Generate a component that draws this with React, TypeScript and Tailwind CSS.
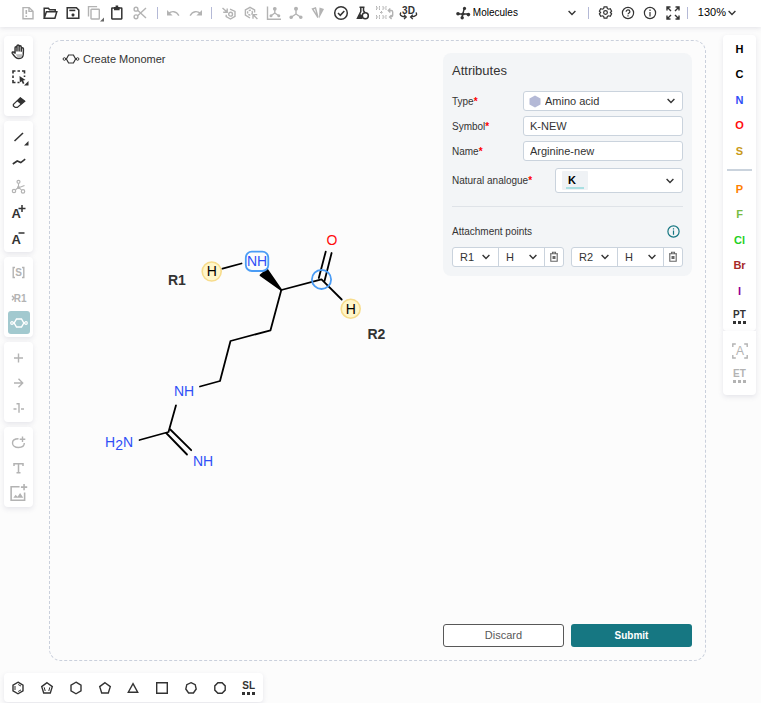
import React from "react";

type IconProps = { children: React.ReactNode; size?: number };

function Icon({ children, size = 16 }: IconProps) {
  return (
    <svg
      width={size}
      height={size}
      viewBox="0 0 16 16"
      fill="none"
      stroke="currentColor"
      strokeWidth="1.4"
      className="shrink-0 overflow-visible"
      aria-hidden="true"
    >
      {children}
    </svg>
  );
}

function Tool({
  label,
  children,
  muted = false,
  active = false,
}: {
  label: string;
  children: React.ReactNode;
  muted?: boolean;
  active?: boolean;
}) {
  const tone = active ? "text-white" : muted ? "text-[#b3b3b3]" : "text-[#333333]";
  return (
    <button type="button" aria-label={label} className={`flex h-[25px] w-full items-center justify-center ${tone}`}>
      {active ? (
        <span className="flex h-[23px] w-[22px] items-center justify-center rounded-[3px] bg-[#a2c9cf]">{children}</span>
      ) : (
        children
      )}
    </button>
  );
}

function Divider() {
  return <span className="block h-3 w-px shrink-0 bg-[#b4b9d6]" />;
}

function Chevron({ className = "" }: { className?: string }) {
  return (
    <svg width="8" height="6" viewBox="0 0 8 6" fill="none" stroke="#333" strokeWidth="1.4" className={className} aria-hidden="true">
      <path d="M.6 1 4 4.4 7.4 1" />
    </svg>
  );
}

function Polygon({ points, children }: { points: string; children?: React.ReactNode }) {
  return (
    <Icon>
      <polygon points={points} />
      {children}
    </Icon>
  );
}

function Header() {
  return (
    <header className="flex h-[27px] shrink-0 items-center bg-white pb-[2px] pl-[17px] shadow-[0_1px_5px_rgba(103,104,132,0.18)]">
      <div className="grid w-[134px] grid-cols-6">
        <Tool label="Clear canvas" muted>
          <Icon>
            <path d="M3 2.6h6.2L13 6.2v7.6H3zM9 2.6v3.8h4" />
            <path d="M6.3 5v4M6.3 10.6v1.4" strokeWidth="1.6" />
          </Icon>
        </Tool>
        <Tool label="Open">
          <Icon>
            <path d="M2.2 13.2V3.2h4.2l1.2 1.6h5.6v2M2.2 13.2l2.2-6.4h10.4l-1.9 6.4z" strokeWidth="1.5" />
          </Icon>
        </Tool>
        <Tool label="Save">
          <Icon>
            <path d="M2.2 2.7h9.2l2.4 2.4v8.2H2.2z" strokeWidth="1.5" />
            <path d="M4.3 5.4h6" strokeWidth="1.6" />
            <rect x="6.6" y="8.6" width="2.8" height="2.8" rx="1" fill="currentColor" stroke="none" />
          </Icon>
        </Tool>
        <Tool label="Copy" muted>
          <Icon>
            <path d="M1.5 11.5V1.6h8.6" />
            <rect x="4" y="4.2" width="8.3" height="9.8" rx=".6" />
            <path d="M17 12.5v4h-4z" fill="#666" stroke="none" />
          </Icon>
        </Tool>
        <Tool label="Paste">
          <Icon>
            <rect x="2.8" y="3" width="10" height="11" rx=".4" strokeWidth="1.5" />
            <path d="M5 2h5.6v3.2H5zM6.6.6h2.6V3H6.6z" fill="currentColor" stroke="none" />
          </Icon>
        </Tool>
        <Tool label="Cut" muted>
          <Icon>
            <circle cx="4" cy="4.2" r="1.9" />
            <circle cx="4" cy="11.8" r="1.9" />
            <path d="M5.6 5.2 14 13M5.6 10.8 14 3" />
          </Icon>
        </Tool>
      </div>
      <div className="ml-[6px]"><Divider /></div>
      <div className="ml-[3px] grid w-[46px] grid-cols-2">
        <Tool label="Undo" muted>
          <Icon>
            <path d="M3.6 8.4c3-2.6 7.6-2.6 10.3 2.3" />
            <path d="M2 4.9v5.7h5.6z" fill="currentColor" stroke="none" />
          </Icon>
        </Tool>
        <Tool label="Redo" muted>
          <Icon>
            <path d="M12.4 8.4c-3-2.6-7.6-2.6-10.3 2.3" />
            <path d="M14 4.9v5.7H8.4z" fill="currentColor" stroke="none" />
          </Icon>
        </Tool>
      </div>
      <div className="ml-[4px]"><Divider /></div>
      <div className="ml-[6px] grid w-[201px] grid-cols-9">
        <Tool label="Aromatize" muted>
          <Icon>
            <path d="m9 4.2 5 2.2v5L9.5 14l-4.3-2.4V9.8M1.5 3l4 3.6M6.2 3.4V7.2H2.2" />
            <circle cx="9.6" cy="9.2" r="1.9" />
          </Icon>
        </Tool>
        <Tool label="Dearomatize" muted>
          <Icon>
            <path d="M7 13 2.4 10.2V5L7 2.4 11.600 5v2.600" />
            <circle cx="7" cy="7.6" r="2.4" strokeDasharray="2 1" />
            <path d="m14.4 14-3.800-3.800M10 13.800V9.600h4.200" />
          </Icon>
        </Tool>
        <Tool label="Layout" muted>
          <Icon>
            <path d="M1.5 1.5v12.7H15M8.8 4v4L5.4 10.5M8.8 8l3.6 2.5" />
            <circle cx="8.8" cy="3.8" r="1.2" fill="currentColor" />
            <circle cx="5" cy="10.8" r=".8" fill="currentColor" />
            <circle cx="12.8" cy="10.8" r=".8" fill="currentColor" />
          </Icon>
        </Tool>
        <Tool label="Clean up" muted>
          <Icon>
            <path d="M8 4v5l-4.500 3M8 9l4.500 3" />
            <circle cx="8" cy="3.7" r="1.3" fill="currentColor" />
            <circle cx="3.2" cy="12.2" r="1.1" fill="currentColor" />
            <circle cx="12.8" cy="12.2" r="1.1" fill="currentColor" />
          </Icon>
        </Tool>
        <Tool label="Calculate CIP" muted>
          <Icon>
            <path d="m2.500 4 3-1L8 12.500z" />
            <path d="M9.5 2.500 14 4 9 13.500z" fill="currentColor" stroke="none" />
          </Icon>
        </Tool>
        <Tool label="Check structure">
          <Icon>
            <circle cx="8" cy="8" r="6.3" strokeWidth="1.5" />
            <path d="m5 8 2.3 2.3 4-4.3" strokeWidth="1.5" />
          </Icon>
        </Tool>
        <Tool label="Calculated values">
          <Icon>
            <path d="M4.5 2.3h5M5.8 2.5v4L2.5 13.300h5M8.5 2.5v3.2l1.5 2" strokeWidth="1.5" />
            <circle cx="10.3" cy="10.7" r="3" strokeWidth="1.5" />
            <path d="M3.8 10.500 5.500 9l2 1.500-.5 2.500H3z" fill="currentColor" stroke="none" />
          </Icon>
        </Tool>
        <Tool label="Add or remove explicit hydrogens" muted>
          <Icon>
            <path
              d="M-.5 1v4M2.500 1v4M-.5 3h3M6 1v4M9 1v4M6 3h3M-.5 10v4M2.500 10v4M-.5 12h3M6 10v4M9 10v4M6 12h3M3 7.500h3M4.500 6v3"
              strokeWidth="1"
              strokeDasharray="1.6 .8"
            />
            <path d="M11.500 5.500h2.700q1.500 0 1.500 1.500v3q0 2-2.700 2M13.300 3.500l-2 2 2 2M14.600 10l-2 2 2 2" />
          </Icon>
        </Tool>
        <Tool label="3D viewer">
          <Icon>
            <text x="8.5" y="9" textAnchor="middle" fill="currentColor" stroke="none" className="font-['Liberation_Sans',sans-serif] text-[10px] font-bold">3D</text>
            <path d="M1 7.500c-2 2-.4 3.800 4 4.400M15.800 7.500c2 2 .3 4-4.800 4.400M4 9.700l2.200 2.200L4 14.100M12.800 9.700l-2.200 2.200 2.200 2.200" strokeWidth="1.300" />
          </Icon>
        </Tool>
      </div>
      <div className="relative ml-auto flex w-[124px] items-center">
        <span className="pointer-events-none absolute left-0 text-[#333333]">
          <Icon>
            <path d="M3.5 9h9M7.8 9l1.500-5.500M7.300 9v4" />
            <circle cx="3" cy="8.800" r="1.800" fill="currentColor" stroke="none" />
            <circle cx="9.500" cy="3.400" r="1.600" fill="currentColor" stroke="none" />
            <circle cx="7.200" cy="12.700" r="1.700" fill="currentColor" stroke="none" />
            <circle cx="13.400" cy="9.600" r="1.800" fill="currentColor" stroke="none" />
            <circle cx="8" cy="9" r="1.600" fill="currentColor" stroke="none" />
          </Icon>
        </span>
        <select aria-label="Editor mode" className="h-5 w-full appearance-none bg-transparent pl-[18px] text-[10px] text-black">
          <option>Molecules</option>
        </select>
        <Chevron className="pointer-events-none absolute right-[3px]" />
      </div>
      <div className="ml-[9px]"><Divider /></div>
      <div className="ml-[5px] grid w-[90px] shrink-0 grid-cols-4">
        <Tool label="Settings">
          <Icon size={15}>
            <path d="M6.5 2h3l.5 1.8 1.3.7 1.8-.5 1.4 2.5L13.2 8l1.3 1.5-1.4 2.5-1.8-.5-1.3.7-.5 1.8h-3L6 12.2l-1.3-.7-1.800.5-1.4-2.5L2.8 8 1.5 6.5 2.900 4l1.800.5L6 3.800z" strokeWidth="1.300" />
            <circle cx="8" cy="8" r="2" strokeWidth="1.300" />
          </Icon>
        </Tool>
        <Tool label="Help">
          <Icon>
            <circle cx="8" cy="8" r="5.6" strokeWidth="1.2" />
            <path d="M6.200 6.700c0-2.400 3.700-2.300 3.700 0C9.900 7.900 8 8 8 9.300M8 10.300v1.200" strokeWidth="1.200" />
          </Icon>
        </Tool>
        <Tool label="About">
          <Icon>
            <circle cx="8" cy="8" r="5.6" strokeWidth="1.2" />
            <path d="M8 4.600v1.300M8 7v4.400" strokeWidth="1.200" />
          </Icon>
        </Tool>
        <Tool label="Fullscreen">
          <Icon>
            <path d="M2 5.500V2h3.500M2 2l4 4M10.500 2H14v3.500M14 2l-4 4M2 10.500V14h3.500M2 14l4-4M10.500 14H14v-3.500M14 14l-4-4" />
          </Icon>
        </Tool>
      </div>
      <div className="ml-[3px]"><Divider /></div>
      <button type="button" className="mr-[25px] ml-[10px] flex shrink-0 items-center gap-[2px] text-[11px] text-black">
        130%
        <Chevron />
      </button>
    </header>
  );
}

function Panel({ children, last = false }: { children: React.ReactNode; last?: boolean }) {
  return (
    <div className={`rounded-[4px] bg-white pt-[3px] shadow-[0_2px_5px_rgba(103,104,132,0.15)] ${last ? "pb-[3px]" : "pb-[2px]"}`}>
      {children}
    </div>
  );
}

function LeftToolbar() {
  return (
    <aside className="mt-[9px] flex w-[29px] shrink-0 flex-col gap-[5px]">
      <Panel>
        <Tool label="Hand tool">
          <Icon size={18}>
            <path d="M4.500 9.500V4.200c0-1.200 1.700-1.200 1.700 0V7.500 2.800c0-1.300 1.900-1.300 1.900 0v4.700-4c0-1.300 1.900-1.300 1.900 0v4.300-2.600c0-1.300 1.900-1.300 1.900 0 0 5.500.3 8.600-4.200 8.600-3 0-4-2-5.600-4.600-.7-1.200.8-2 2.400-.2z" strokeWidth="1.300" />
            <path d="M5 10h6.500l-1.500 3H7z" fill="#bbb" stroke="none" />
          </Icon>
        </Tool>
        <Tool label="Rectangle selection">
          <Icon>
            <path d="M2 4.500V2h2.500M6.500 2H9M11 2h2.500v2.500M2 6.500V9M2 11v2.500h2.500M6.500 13.500h2M13.500 6.500v1.500" strokeWidth="1.600" />
            <path d="m8.500 7 6 4-2.400.5 1.300 2.700-1.500.7-1.300-2.700-1.800 1.400z" fill="currentColor" stroke="none" />
            <path d="M17.500 12v4.500H13z" fill="currentColor" stroke="none" />
          </Icon>
        </Tool>
        <Tool label="Erase">
          <Icon>
            <path d="m2.400 10.400 6.900-6.600 4.400 3.400-7.400 6.200H4.200L2.400 12z" strokeWidth="1.300" />
            <path d="m5.800 7 3.700-3.600L14 7l-4 3.600z" fill="currentColor" stroke="none" />
          </Icon>
        </Tool>
      </Panel>
      <Panel last>
        <Tool label="Single bond">
          <Icon>
            <path d="m3.500 12 8.500-8" strokeWidth="1.600" />
            <path d="M17.500 12v4.500H13z" fill="currentColor" stroke="none" />
          </Icon>
        </Tool>
        <Tool label="Chain">
          <Icon><path d="m1.800 10 4.400-3 3.600 1.600 4.400-3.400" strokeWidth="1.600" /></Icon>
        </Tool>
        <Tool label="Stereochemistry" muted>
          <Icon>
            <circle cx="7.500" cy="2.800" r="1.500" strokeWidth="1.200" />
            <circle cx="3" cy="12" r="1.700" strokeWidth="1.200" />
            <circle cx="12" cy="12.400" r="1.700" strokeWidth="1.200" />
            <circle cx="7.500" cy="8.500" r="1.400" fill="currentColor" stroke="none" />
            <path d="M7.500 4.500v4l-3 2.300M7.500 8.500l3 2.400M9 8.300l4.500-1.800" strokeWidth="1.100" />
          </Icon>
        </Tool>
        <Tool label="Charge plus">
          <Icon>
            <text x=".6" y="14" fill="currentColor" stroke="none" className="font-['Liberation_Sans',sans-serif] text-[13px] font-bold">A</text>
            <path d="M11 1v7M7.500 4.500h7" strokeWidth="1.500" />
          </Icon>
        </Tool>
        <Tool label="Charge minus">
          <Icon>
            <text x=".6" y="15" fill="currentColor" stroke="none" className="font-['Liberation_Sans',sans-serif] text-[13px] font-bold">A</text>
            <path d="M7.500 4h6" strokeWidth="1.500" />
          </Icon>
        </Tool>
      </Panel>
      <Panel>
        <Tool label="S-Group" muted>
          <Icon>
            <path d="M4 2.500H2.200v10H4M11 2.500h1.800v10H11" />
            <text x="7.500" y="11" textAnchor="middle" fill="currentColor" stroke="none" className="font-['Liberation_Sans',sans-serif] text-[10px] font-bold">S</text>
          </Icon>
        </Tool>
        <Tool label="R-Group label" muted>
          <Icon>
            <path d="m1 5.800 2.200 2.200L1 10.200" />
            <text x="2.800" y="11.600" fill="currentColor" stroke="none" className="font-['Liberation_Sans',sans-serif] text-[10px] font-bold">R1</text>
          </Icon>
        </Tool>
        <Tool label="Create monomer" active>
          <Icon>
            <path d="M5.500 4h5l2.300 4-2.300 4h-5L3.200 8zM2 8h1.200M12.800 8H14" />
            <circle cx="1" cy="8" r="1.3" strokeWidth="1.2" />
            <circle cx="15" cy="8" r="1.3" strokeWidth="1.2" />
          </Icon>
        </Tool>
      </Panel>
      <Panel>
        <Tool label="Reaction plus" muted>
          <Icon><path d="M7.500 3.500v9M3 8h9" /></Icon>
        </Tool>
        <Tool label="Reaction arrow" muted>
          <Icon><path d="M3 8h8.500M7.500 3.800 11.700 8l-4.200 4.200" /></Icon>
        </Tool>
        <Tool label="Reaction mapping" muted>
          <Icon><path d="M2.500 9h3M10 9h3M5.500 3.700H8v9" /></Icon>
        </Tool>
      </Panel>
      <Panel>
        <Tool label="Shape ellipse" muted>
          <Icon>
            <path d="M7.500 3.800C3.500 3.800 1.500 5.600 1.500 8c0 2.400 2.300 4.500 6 4.500s5.800-2 5.800-4.500M11.500 1.500v5.600M8.700 4.300h5.600" />
          </Icon>
        </Tool>
        <Tool label="Add text" muted>
          <Icon><path d="M3 6V3.700h9V6M7.500 3.700v8.800M5.500 12.700h4" strokeWidth="1.500" /></Icon>
        </Tool>
        <Tool label="Add image" muted>
          <Icon size={18}>
            <path d="M8.500 2.500H1v12h12V7.500M12.500 0v5.600M9.700 2.800h5.600" />
            <path d="m3 12.300 2-2.800 1.700 1.800 2.300-3.300 2.800 4.300z" fill="currentColor" stroke="none" />
          </Icon>
        </Tool>
      </Panel>
    </aside>
  );
}

function Dotted({ text }: { text: string }) {
  return (
    <span className="flex flex-col items-center gap-px">
      <span className="text-[10px] leading-[10px] font-bold">{text}</span>
      <svg width="13" height="3" viewBox="0 0 13 3" fill="currentColor" aria-hidden="true">
        <rect width="3" height="3" />
        <rect x="5" width="3" height="3" />
        <rect x="10" width="3" height="3" />
      </svg>
    </span>
  );
}

const commonAtoms = [
  { symbol: "H", tone: "text-black" },
  { symbol: "C", tone: "text-black" },
  { symbol: "N", tone: "text-[#304ff7]" },
  { symbol: "O", tone: "text-[#ff0d0d]" },
  { symbol: "S", tone: "text-[#c99a19]" },
];
const otherAtoms = [
  { symbol: "P", tone: "text-[#ff8000]" },
  { symbol: "F", tone: "text-[#78bc42]" },
  { symbol: "Cl", tone: "text-[#1fd01f]" },
  { symbol: "Br", tone: "text-[#a62929]" },
  { symbol: "I", tone: "text-[#940094]" },
];

function AtomList({ atoms }: { atoms: { symbol: string; tone: string }[] }) {
  return (
    <div className="grid h-32 grid-rows-5">
      {atoms.map(({ symbol, tone }) => (
        <button key={symbol} type="button" className={`w-full text-center text-[11px] font-bold ${tone}`}>
          {symbol}
        </button>
      ))}
    </div>
  );
}

function RightToolbar() {
  return (
    <aside className="mt-2 w-[33px] shrink-0">
      <div className="rounded-[4px] bg-white pt-px pb-[2px] shadow-[0_2px_5px_rgba(103,104,132,0.15)]">
        <AtomList atoms={commonAtoms} />
        <div className="mx-1 my-[5px] h-[2px] bg-[#cad3dd]" />
        <AtomList atoms={otherAtoms} />
        <Tool label="Periodic table"><Dotted text="PT" /></Tool>
      </div>
      <div className="rounded-b-[4px] bg-white py-[7px] shadow-[0_2px_5px_rgba(103,104,132,0.15)]">
        <Tool label="Any atom" muted>
          <Icon>
            <path d="M.8 4V1h3M12.200 1h3v3M.8 12v3h3M12.200 15h3v-3" />
            <text x="8" y="12" textAnchor="middle" fill="currentColor" stroke="none" className="font-['Liberation_Sans',sans-serif] text-[12px]">A</text>
          </Icon>
        </Tool>
        <Tool label="Extended table" muted><Dotted text="ET" /></Tool>
      </div>
    </aside>
  );
}

function Molecule() {
  return (
    <svg
      width="300"
      height="250"
      viewBox="100 225 300 250"
      className="mt-40 ml-[37px] shrink-0 font-['Liberation_Sans',Arial,sans-serif] text-[14px]"
      role="img"
      aria-label="Arginine structure with attachment points R1 and R2"
    >
      <g fill="#fff6c9" stroke="#f7dc8c" strokeWidth="1.6">
        <circle cx="211.7" cy="271.5" r="9.5" />
        <circle cx="350.7" cy="308.7" r="9.5" />
      </g>
      <g fill="none" stroke="black" strokeWidth="1.8" strokeLinecap="round" strokeLinejoin="round">
        <path d="M222.500 268.700 241.500 263.500" />
        <path d="M281.300 290 321.500 279.300 341.700 299.500" />
        <path d="M318.800 278 325.700 251.700M324.500 281 331.600 253" />
        <path d="M281.300 290 270.500 330.300 230.500 341 220 381 200 386.500" />
        <path d="M176 405.300 168.500 432 139.500 440" />
        <path d="M170.300 429.500 191.200 450.200M166.200 433 187 454.500" />
        <path d="M281.300 290 260.500 275.300 267.300 269.800z" fill="black" />
      </g>
      <g fill="none" stroke="#4a9cf5" strokeWidth="1.8">
        <rect x="245.8" y="251.7" width="22.5" height="19.3" rx="6" />
        <circle cx="321.5" cy="279.4" r="9.6" />
      </g>
      <g textAnchor="middle">
        <text x="211.7" y="276.3">H</text>
        <text x="350.7" y="313.5">H</text>
        <text x="332" y="244.5" fill="#ff0d0d">O</text>
        <g fill="#304ff7">
          <text x="257" y="265.5">NH</text>
          <text x="184" y="396.3">NH</text>
          <text x="203" y="466">NH</text>
        </g>
      </g>
      <text x="105" y="447" fill="#304ff7">
        H<tspan dy="3">2</tspan><tspan dy="-3">N</tspan>
      </text>
      <g fill="#333333" className="font-bold">
        <text x="168" y="285">R1</text>
        <text x="367.5" y="339">R2</text>
      </g>
    </svg>
  );
}

function Label({ htmlFor, children }: { htmlFor: string; children: string }) {
  return (
    <label htmlFor={htmlFor} className="text-[10px]">
      {children}
      <span className="font-bold text-[#ff0000]">*</span>
    </label>
  );
}

const box = "rounded-[3px] border border-[#cad3dd] bg-white text-[11px] text-[#333333]";

function AttachmentPoint({ name }: { name: string }) {
  return (
    <div className="flex h-5 flex-1 rounded-[3px] border border-[#cad3dd] bg-white">
      <div className="relative flex flex-1 items-center border-r border-[#cad3dd]">
        <select aria-label={`${name} label`} className="h-full w-full appearance-none bg-transparent pl-[7px] text-[11px]">
          <option>{name}</option>
        </select>
        <Chevron className="pointer-events-none absolute right-2" />
      </div>
      <div className="relative flex flex-1 items-center border-r border-[#cad3dd]">
        <select aria-label={`${name} leaving group`} className="h-full w-full appearance-none bg-transparent pl-[7px] text-[11px]">
          <option>H</option>
        </select>
        <Chevron className="pointer-events-none absolute right-[7px]" />
      </div>
      <button type="button" aria-label={`Delete ${name}`} className="flex w-[18px] items-center justify-center text-[#666666]">
        <svg width="10" height="12" viewBox="0 0 10 12" fill="none" stroke="currentColor" strokeWidth="1.1" aria-hidden="true">
          <path d="M1 2.700h8M3.500 2.500V1.200h3v1.300M1.800 2.700v7.600h6.400V2.700" />
          <rect x="3.5" y="5" width="3" height="3" fill="currentColor" stroke="none" />
        </svg>
      </button>
    </div>
  );
}

function Attributes() {
  return (
    <section className="rounded-lg bg-[#f3f5f7] px-[9px] pt-2 pb-[9px] text-[#333333]">
      <h2 className="text-[13px] leading-5">Attributes</h2>
      <div className="mt-[10px] flex flex-col gap-[5px]">
        <div className="flex items-center justify-between">
          <Label htmlFor="type">Type</Label>
          <div className="relative flex w-[160px] items-center">
            <select id="type" className={`h-5 w-full appearance-none pl-[21px] ${box}`}>
              <option>Amino acid</option>
            </select>
            <svg width="12" height="13" viewBox="0 0 12 13" className="pointer-events-none absolute left-[6px]" aria-hidden="true">
              <path d="M6 .5 11.500 3.500v6L6 12.500.5 9.500v-6z" fill="#b4b9d6" />
            </svg>
            <Chevron className="pointer-events-none absolute right-2" />
          </div>
        </div>
        <div className="flex items-center justify-between">
          <Label htmlFor="symbol">Symbol</Label>
          <input id="symbol" defaultValue="K-NEW" className={`h-5 w-[160px] px-[6px] ${box}`} />
        </div>
        <div className="flex items-center justify-between">
          <Label htmlFor="name">Name</Label>
          <input id="name" defaultValue="Arginine-new" className={`h-5 w-[160px] px-[6px] ${box}`} />
        </div>
      </div>
      <div className="mt-[7px] flex items-center justify-between">
        <Label htmlFor="analogue">Natural analogue</Label>
        <div className={`relative flex h-[25px] w-[128px] items-center ${box}`}>
          <span className="pointer-events-none absolute left-[6px] flex h-[19px] w-[26px] items-end rounded-[1px] bg-[#eff2f5] px-1 pb-px">
            <span className="h-[2px] w-full bg-[#aadfe2]" />
          </span>
          <select id="analogue" className="relative h-full w-full appearance-none bg-transparent pl-3 text-[11px] font-bold text-black">
            <option>K</option>
          </select>
          <Chevron className="pointer-events-none absolute right-2" />
        </div>
      </div>
      <hr className="mt-[13px] border-[#dfe3e8]" />
      <div className="mt-4 flex h-4 items-center justify-between pr-[3px]">
        <h3 className="text-[10px]">Attachment points</h3>
        <button type="button" aria-label="About attachment points" className="text-[#167782]">
          <svg width="13" height="13" viewBox="0 0 13 13" fill="none" stroke="currentColor" strokeWidth="1.2" aria-hidden="true">
            <circle cx="6.5" cy="6.5" r="5.6" />
            <path d="M6.500 3.200v1.300M6.500 5.600v4.200" />
          </svg>
        </button>
      </div>
      <div className="mt-2 flex gap-[7px]">
        <AttachmentPoint name="R1" />
        <AttachmentPoint name="R2" />
      </div>
    </section>
  );
}

function Templates() {
  return (
    <footer className="mb-px ml-1 grid h-[29px] w-[259px] shrink-0 grid-cols-9 items-center rounded-[4px] bg-white shadow-[0_2px_5px_rgba(103,104,132,0.15)]">
      <Tool label="Benzene">
        <Polygon points="8,2.2 13,5.1 13,10.9 8,13.8 3,10.9 3,5.1">
          <path d="M5 6v4M8.200 4.500l2.800 1.600M8.200 11.500l2.800-1.600" strokeWidth="1" />
        </Polygon>
      </Tool>
      <Tool label="Cyclopentadiene">
        <Polygon points="8,2.7 13.3,6.6 11.3,13 4.7,13 2.7,6.6">
          <path d="M5.200 7.300 6.200 11M10.800 7.300 9.800 11" strokeWidth="1" />
        </Polygon>
      </Tool>
      <Tool label="Cyclohexane"><Polygon points="8,2.2 13,5.1 13,10.9 8,13.8 3,10.9 3,5.1" /></Tool>
      <Tool label="Cyclopentane"><Polygon points="8,2.7 13.3,6.6 11.3,13 4.7,13 2.7,6.6" /></Tool>
      <Tool label="Cyclopropane"><Polygon points="8,3.7 12.7,12.2 3.3,12.2" /></Tool>
      <Tool label="Cyclobutane"><Polygon points="2.7,2.7 13.3,2.7 13.3,13.3 2.7,13.3" /></Tool>
      <Tool label="Cycloheptane"><Polygon points="8,2.7 12.2,4.7 13.2,9 10.4,13 5.6,13 2.8,9 3.8,4.7" /></Tool>
      <Tool label="Cyclooctane"><Polygon points="5.9,2.8 10.1,2.8 13.2,5.9 13.2,10.1 10.1,13.2 5.9,13.2 2.8,10.1 2.8,5.9" /></Tool>
      <Tool label="Structure library"><Dotted text="SL" /></Tool>
    </footer>
  );
}

export default function App() {
  return (
    <div className="flex min-h-screen flex-col bg-[#fcfcfc] font-['Liberation_Sans',Arial,sans-serif]">
      <Header />
      <div className="flex flex-1 items-start pr-[5px] pb-3 pl-1">
        <LeftToolbar />
        <main className="mt-[13px] mr-[17px] ml-4 flex flex-1 justify-between self-stretch rounded-xl border border-dashed border-[#cad0dc] px-[13px] pt-3 pb-[13px]">
          <div className="flex flex-col">
            <h1 className="flex h-3 items-center gap-[4px] text-[11px] text-[#333333]">
              <Icon>
                <path d="M5.600 4h4.800l2.200 4-2.200 4H5.600L3.400 8z" strokeWidth="1.200" />
                <circle cx="1.400" cy="8" r="1.300" strokeWidth="1" />
                <circle cx="14.600" cy="8" r="1.300" strokeWidth="1" />
              </Icon>
              Create Monomer
            </h1>
            <Molecule />
          </div>
          <div className="flex w-[249px] shrink-0 flex-col justify-between">
            <Attributes />
            <div className="grid grid-cols-2 gap-[7px]">
              <button type="button" className="h-[23px] rounded-[3px] border border-[#585858] bg-white text-[11px] text-[#585858]">Discard</button>
              <button type="button" className="h-[23px] rounded-[3px] bg-[#167782] text-[10px] font-bold text-white">Submit</button>
            </div>
          </div>
        </main>
        <RightToolbar />
      </div>
      <Templates />
    </div>
  );
}
